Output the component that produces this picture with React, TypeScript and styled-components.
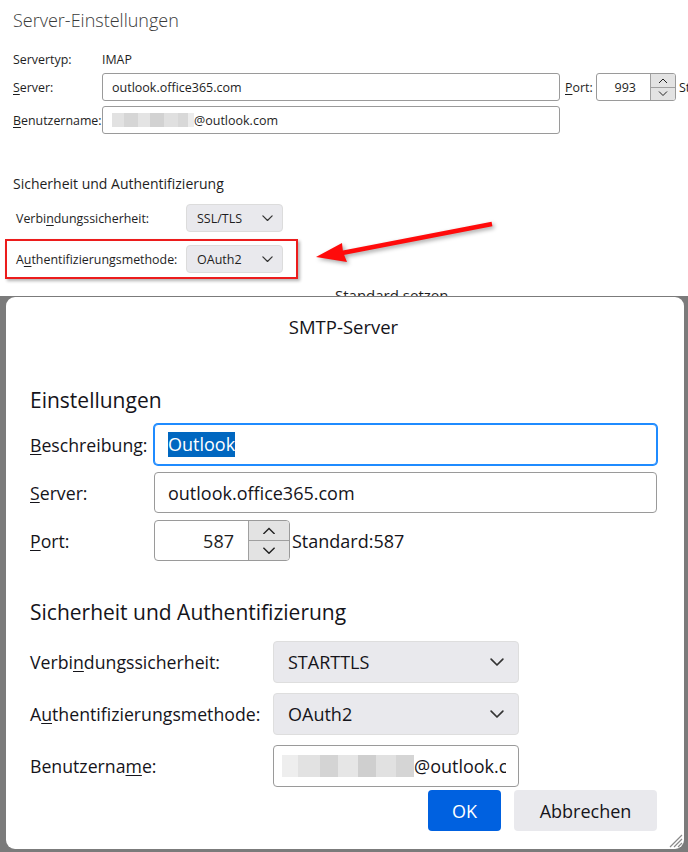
import styled, { createGlobalStyle } from "styled-components";

const GlobalStyle = createGlobalStyle`
  html, body {
    margin: 0;
    padding: 0;
    background: #ffffff;
  }
  body {
    font-family: "Open Sans", "Noto Sans", sans-serif;
    color: #1b1b1b;
  }
  #root {
    width: 688px;
    height: 852px;
    overflow: hidden;
  }
`;

const Page = styled.div`
  width: 688px;
  height: 852px;
  display: flex;
  flex-direction: column;
`;

/* ---------- background window: Server-Einstellungen ---------- */

const Settings = styled.section`
  position: relative;
  height: 296px;
  flex-shrink: 0;
  box-sizing: border-box;
  padding: 7px 0 0 13px;
  overflow: hidden;
`;

const PageTitle = styled.h1`
  margin: 0;
  font-size: 18px;
  font-weight: 300;
  line-height: 26px;
  color: #3a3a3a;
`;

const ServerGrid = styled.div`
  display: grid;
  grid-template-columns: 89px 458px 36px 80px auto;
  grid-auto-rows: 28px;
  grid-template-rows: 18px;
  row-gap: 5px;
  align-items: center;
  margin-top: 17px;
  white-space: nowrap;
`;

const SmallLabel = styled.span<{ $indent?: number }>`
  font-size: 12.4px;
  color: #1e1e1e;
  margin-left: ${({ $indent }) => $indent ?? 0}px;
`;

const SmallValue = styled.span`
  font-size: 12.4px;
  color: #1e1e1e;
`;

const Key = styled.u`
  text-decoration-thickness: 1px;
  text-underline-offset: 2px;
`;

const SmallInput = styled.div`
  height: 28px;
  box-sizing: border-box;
  border: 1px solid #9a9a9a;
  border-radius: 3px;
  display: flex;
  align-items: center;
  padding-left: 9px;
  font-size: 12.5px;
  color: #1e1e1e;
  background: #fff;
`;

const SmallSpin = styled.div`
  height: 28px;
  box-sizing: border-box;
  border: 1px solid #9a9a9a;
  border-radius: 3px;
  display: flex;
  background: #fff;
  overflow: hidden;
`;

const SpinValue = styled.div<{ $size: number; $pad: number }>`
  flex: 1;
  display: flex;
  align-items: center;
  justify-content: flex-end;
  padding-right: ${({ $pad }) => $pad}px;
  font-size: ${({ $size }) => $size}px;
  color: #1e1e1e;
`;

const SpinButtons = styled.div<{ $w: number }>`
  width: ${({ $w }) => $w}px;
  display: flex;
  flex-direction: column;
  border-left: 1px solid #a0a0a0;
`;

const SpinButton = styled.div<{ $bottom?: boolean }>`
  flex: 1;
  display: flex;
  align-items: center;
  justify-content: center;
  background: #e3e3e3;
  border-top: ${({ $bottom }) => ($bottom ? "1px solid #a0a0a0" : "none")};
  color: #333;
`;

const Cut = styled.span`
  font-size: 12.4px;
  margin-left: 3px;
`;

const SmallHeading = styled.h2`
  margin: 40px 0 0;
  font-size: 14px;
  font-weight: 400;
  line-height: 20px;
  color: #1e1e1e;
`;

const SecRows = styled.div`
  display: flex;
  flex-direction: column;
  gap: 1px;
  margin: 4px 0 0 -8px;
`;

const SecRow = styled.div<{ $marked?: boolean }>`
  width: 293px;
  box-sizing: border-box;
  display: flex;
  align-items: center;
  padding: 4px 0 4px 9px;
  border: 2px solid ${({ $marked }) => ($marked ? "#ec1c1c" : "transparent")};
  box-shadow: ${({ $marked }) =>
    $marked ? "2px 2px 3px rgba(0, 0, 0, 0.3)" : "none"};
`;

const SecLabel = styled.span`
  width: 170px;
  font-size: 12.4px;
  color: #1e1e1e;
`;

const SmallSelect = styled.div`
  width: 97px;
  height: 28px;
  box-sizing: border-box;
  border-radius: 4px;
  background: #e9e9ed;
  border: 1px solid #dcdcdc;
  display: flex;
  align-items: center;
  justify-content: space-between;
  padding: 0 9px 0 10px;
  font-size: 12.5px;
  color: #1e1e1e;
`;

const BehindText = styled.div`
  margin: 7px 0 0 322px;
  font-size: 15px;
  line-height: 18px;
  color: #1e1e1e;
`;

const Arrow = styled.svg`
  position: absolute;
  left: 300px;
  top: 205px;
  filter: drop-shadow(2px 2px 2px rgba(0, 0, 0, 0.35));
`;

/* ---------- dialog: SMTP-Server ---------- */

const DialogFrame = styled.div`
  flex: 1;
  display: flex;
  background: #7b7b7b;
  padding: 1px 4px 3px 6px;
`;

const Dialog = styled.div`
  position: relative;
  flex: 1;
  display: flex;
  flex-direction: column;
  background: #ffffff;
  border-radius: 9px;
  padding: 0 27px 0 24px;
  color: #15141a;
`;

const DialogTitle = styled.div`
  padding-top: 19px;
  height: 41px;
  line-height: 22px;
  text-align: center;
  font-size: 18.5px;
`;

const Heading = styled.h2<{ $top: number }>`
  margin: ${({ $top }) => $top}px 0 0;
  font-size: 21px;
  font-weight: 500;
  line-height: 28px;
`;

const FormGrid = styled.div<{ $label: number; $row: number; $gap: number; $top: number }>`
  display: grid;
  grid-template-columns: ${({ $label }) => $label}px 1fr;
  grid-auto-rows: ${({ $row }) => $row}px;
  row-gap: ${({ $gap }) => $gap}px;
  align-items: center;
  margin-top: ${({ $top }) => $top}px;
`;

const Label = styled.span`
  font-size: 17.7px;
  white-space: nowrap;
`;

const Field = styled.div<{ $focused?: boolean; $width?: number; $pad?: number }>`
  height: 100%;
  width: ${({ $width }) => ($width ? `${$width}px` : "auto")};
  box-sizing: border-box;
  border: 1px solid ${({ $focused }) => ($focused ? "#1f8bff" : "#9a9a9a")};
  box-shadow: ${({ $focused }) => ($focused ? "0 0 0 1px #1f8bff" : "none")};
  border-radius: 4px;
  display: flex;
  align-items: center;
  padding-left: ${({ $pad }) => $pad ?? 13}px;
  font-size: 18px;
  background: #fff;
  overflow: hidden;
  white-space: nowrap;
`;

const FieldText = styled.span`
  flex: 1;
  min-width: 0;
  overflow: hidden;
  margin-right: 12px;
  display: flex;
  align-items: center;
`;

const Selected = styled.span`
  background: #0067c0;
  color: #ffffff;
  line-height: 25px;
`;

const PortRow = styled.div`
  display: flex;
  align-items: center;
  height: 100%;
`;

const Spin = styled.div`
  width: 136px;
  height: 100%;
  box-sizing: border-box;
  border: 1px solid #9a9a9a;
  border-radius: 4px;
  display: flex;
  background: #fff;
  overflow: hidden;
`;

const SpinNote = styled.span`
  font-size: 18px;
  margin-left: 2px;
`;

const Select = styled.div`
  width: 246px;
  height: 100%;
  box-sizing: border-box;
  border-radius: 4px;
  background: #e9e9ed;
  border: 1px solid #dedede;
  display: flex;
  align-items: center;
  justify-content: space-between;
  padding: 0 14px 0 14px;
  font-size: 18px;
`;

const Blur = styled.span`
  display: inline-flex;
  flex-shrink: 0;
`;

const BlurCell = styled.span<{ $w: number; $h: number; $c: string }>`
  width: ${({ $w }) => $w}px;
  height: ${({ $h }) => $h}px;
  background: ${({ $c }) => $c};
`;

const Buttons = styled.div`
  display: flex;
  justify-content: flex-end;
  gap: 13px;
  margin-top: 3px;
`;

const Button = styled.button<{ $primary?: boolean; $width: number }>`
  width: ${({ $width }) => $width}px;
  height: 41px;
  border: none;
  border-radius: 4px;
  font-family: inherit;
  font-size: 18px;
  background: ${({ $primary }) => ($primary ? "#0061e0" : "#e9e9ed")};
  color: ${({ $primary }) => ($primary ? "#ffffff" : "#15141a")};
  padding: 0;
`;

const Grip = styled.svg`
  position: absolute;
  right: 1px;
  bottom: 1px;
`;

function Chevron({ size, stroke }: { size: number; stroke: number }) {
  return (
    <svg width={size} height={size * 0.6} viewBox="0 0 10 6">
      <path
        d="M0.8 0.8 L5 5 L9.2 0.8"
        fill="none"
        stroke="#333"
        strokeWidth={stroke}
        strokeLinecap="round"
        strokeLinejoin="round"
      />
    </svg>
  );
}

function SpinArrow({ up, size }: { up?: boolean; size: number }) {
  return (
    <svg width={size} height={size * 0.55} viewBox="0 0 10 5.5">
      <path
        d={up ? "M1 5 L5 1 L9 5" : "M1 0.5 L5 4.5 L9 0.5"}
        fill="none"
        stroke="#222"
        strokeWidth={1}
      />
    </svg>
  );
}

const blurSmall = [
  { w: 12, h: 14, c: "#e2e2e2" },
  { w: 14, h: 14, c: "#d6d6d6" },
  { w: 12, h: 14, c: "#e4e4e4" },
  { w: 14, h: 14, c: "#d2d2d2" },
  { w: 14, h: 14, c: "#e0e0e0" },
  { w: 10, h: 14, c: "#d8d8d8" },
  { w: 6, h: 14, c: "#ececec" },
];

const blurLarge = [
  { w: 16, h: 22, c: "#eeeeee" },
  { w: 22, h: 22, c: "#e2e2e2" },
  { w: 18, h: 22, c: "#d4d4d4" },
  { w: 20, h: 22, c: "#e6e6e6" },
  { w: 18, h: 22, c: "#cfcfcf" },
  { w: 20, h: 22, c: "#e1e1e1" },
  { w: 18, h: 22, c: "#d5d5d5" },
];

function App() {
  return (
    <>
      <GlobalStyle />
      <Page>
        <Settings>
          <PageTitle>Server-Einstellungen</PageTitle>

          <ServerGrid>
            <SmallLabel>Servertyp:</SmallLabel>
            <SmallValue>IMAP</SmallValue>
            <span />
            <span />
            <span />

            <SmallLabel>
              <Key>S</Key>erver:
            </SmallLabel>
            <SmallInput>outlook.office365.com</SmallInput>
            <SmallLabel $indent={5}>
              <Key>P</Key>ort:
            </SmallLabel>
            <SmallSpin>
              <SpinValue $size={12.5} $pad={14}>
                993
              </SpinValue>
              <SpinButtons $w={24}>
                <SpinButton>
                  <SpinArrow up size={10} />
                </SpinButton>
                <SpinButton $bottom>
                  <SpinArrow size={10} />
                </SpinButton>
              </SpinButtons>
            </SmallSpin>
            <Cut>Standard: 993</Cut>

            <SmallLabel>
              <Key>B</Key>enutzername:
            </SmallLabel>
            <SmallInput>
              <Blur>
                {blurSmall.map((b, i) => (
                  <BlurCell key={i} $w={b.w} $h={b.h} $c={b.c} />
                ))}
              </Blur>
              @outlook.com
            </SmallInput>
          </ServerGrid>

          <SmallHeading>Sicherheit und Authentifizierung</SmallHeading>
          <SecRows>
            <SecRow>
              <SecLabel>
                Verbi<Key>n</Key>dungssicherheit:
              </SecLabel>
              <SmallSelect>
                SSL/TLS
                <Chevron size={11} stroke={1.1} />
              </SmallSelect>
            </SecRow>
            <SecRow $marked>
              <SecLabel>
                A<Key>u</Key>thentifizierungsmethode:
              </SecLabel>
              <SmallSelect>
                OAuth2
                <Chevron size={11} stroke={1.1} />
              </SmallSelect>
            </SecRow>
          </SecRows>

          <BehindText>Standard setzen</BehindText>

          <Arrow width="200" height="70" viewBox="0 0 200 70">
            <line
              x1="192"
              y1="19"
              x2="42"
              y2="48"
              stroke="#ff0b0b"
              strokeWidth="4.5"
            />
            <polygon points="16,52 42,38 43,47 47,57" fill="#ff0b0b" />
          </Arrow>
        </Settings>

        <DialogFrame>
          <Dialog>
            <DialogTitle>SMTP-Server</DialogTitle>

            <Heading $top={29}>Einstellungen</Heading>
            <FormGrid $label={124} $row={41} $gap={7} $top={10}>
              <Label>
                <Key>B</Key>eschreibung:
              </Label>
              <Field $focused>
                <Selected>Outlook</Selected>
              </Field>

              <Label>
                <Key>S</Key>erver:
              </Label>
              <Field>outlook.office365.com</Field>

              <Label>
                <Key>P</Key>ort:
              </Label>
              <PortRow>
                <Spin>
                  <SpinValue $size={18} $pad={14}>
                    587
                  </SpinValue>
                  <SpinButtons $w={40}>
                    <SpinButton>
                      <SpinArrow up size={14} />
                    </SpinButton>
                    <SpinButton $bottom>
                      <SpinArrow size={14} />
                    </SpinButton>
                  </SpinButtons>
                </Spin>
                <SpinNote>Standard:587</SpinNote>
              </PortRow>
            </FormGrid>

            <Heading $top={37}>Sicherheit und Authentifizierung</Heading>
            <FormGrid $label={243} $row={42} $gap={10} $top={15}>
              <Label>
                Verbi<Key>n</Key>dungssicherheit:
              </Label>
              <Select>
                STARTTLS
                <Chevron size={14} stroke={1.2} />
              </Select>

              <Label>
                A<Key>u</Key>thentifizierungsmethode:
              </Label>
              <Select>
                OAuth2
                <Chevron size={14} stroke={1.2} />
              </Select>

              <Label>
                Benutzerna<Key>m</Key>e:
              </Label>
              <Field $width={246} $pad={8}>
                <FieldText>
                  <Blur>
                    {blurLarge.map((b, i) => (
                      <BlurCell key={i} $w={b.w} $h={b.h} $c={b.c} />
                    ))}
                  </Blur>
                  @outlook.com
                </FieldText>
              </Field>
            </FormGrid>

            <Buttons>
              <Button $primary $width={73}>
                OK
              </Button>
              <Button $width={143}>Abbrechen</Button>
            </Buttons>

            <Grip width="18" height="18" viewBox="0 0 18 18">
              <path
                d="M17 5 L5 17 M17 9 L9 17 M17 13 L13 17"
                stroke="#8a8a8a"
                strokeWidth="1.2"
              />
            </Grip>
          </Dialog>
        </DialogFrame>
      </Page>
    </>
  );
}

export default App;
